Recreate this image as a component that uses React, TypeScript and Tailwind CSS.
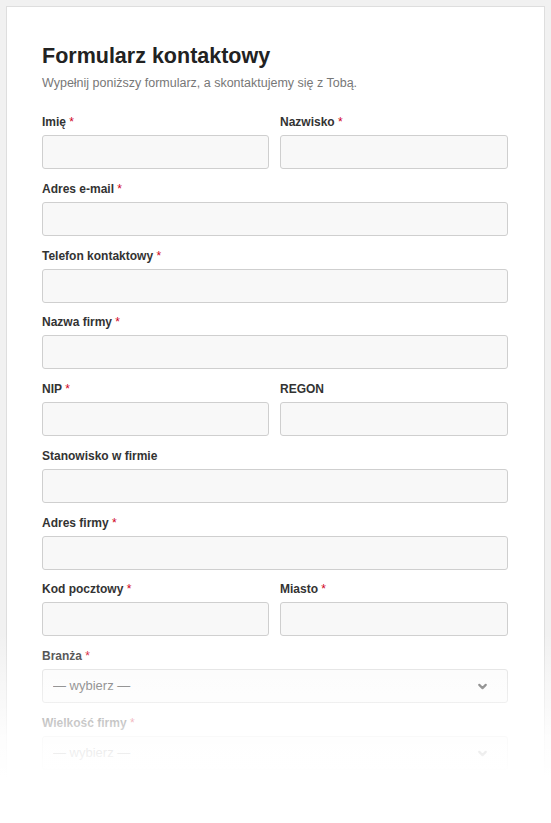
import { ChevronDown } from "lucide-react";

type Field = {
  label: string;
  required?: boolean;
};

const rows: Field[][] = [
  [{ label: "Imię", required: true }, { label: "Nazwisko", required: true }],
  [{ label: "Adres e-mail", required: true }],
  [{ label: "Telefon kontaktowy", required: true }],
  [{ label: "Nazwa firmy", required: true }],
  [{ label: "NIP", required: true }, { label: "REGON" }],
  [{ label: "Stanowisko w firmie" }],
  [{ label: "Adres firmy", required: true }],
  [{ label: "Kod pocztowy", required: true }, { label: "Miasto", required: true }],
];

function Label({ label, required }: Field) {
  return (
    <label className="block text-[12px] leading-[16px] font-bold text-[#333] mb-[5px]">
      {label}
      {required && <span className="text-[#d0021b] font-normal"> *</span>}
    </label>
  );
}

function TextField(f: Field) {
  return (
    <div>
      <Label {...f} />
      <input
        type="text"
        className="block w-full h-[34px] rounded-[3px] border border-[#cfcfcf] bg-[#f8f8f8] px-3 text-[13px] outline-none"
      />
    </div>
  );
}

function SelectField(f: Field) {
  return (
    <div>
      <Label {...f} />
      <div className="relative">
        <select className="block w-full h-[34px] appearance-none rounded-[3px] border border-[#dcdcdc] bg-[#fbfbfb] pl-[10px] pr-8 text-[13px] text-[#444] outline-none">
          <option>— wybierz —</option>
        </select>
        <ChevronDown
          size={13}
          strokeWidth={4}
          className="pointer-events-none absolute right-[19px] top-[11px] text-[#444]"
        />
      </div>
    </div>
  );
}

export default function App() {
  return (
    <div
      className="relative h-screen overflow-hidden bg-[#f1f1f1] px-[6px] pt-[6px]"
      style={{ fontFamily: '"Liberation Sans", Arial, sans-serif' }}
    >
      <div className="border border-[#dedede] bg-white pl-[35px] pr-[36px] pt-[36px] pb-10">
        <h1 className="text-[21.5px] leading-[26px] font-bold text-[#222]">Formularz kontaktowy</h1>
        <p className="mt-[5px] text-[12.5px] leading-[18px] text-[#777]">
          Wypełnij poniższy formularz, a skontaktujemy się z Tobą.
        </p>

        <form className="mt-[22px] flex flex-col gap-[11.78px]">
          {rows.map((row, i) => (
            <div key={i} className={row.length > 1 ? "grid grid-cols-[227px_1fr] gap-[11px]" : ""}>
              {row.map((f) => (
                <TextField key={f.label} {...f} />
              ))}
            </div>
          ))}
          <SelectField label="Branża" required />
          <SelectField label="Wielkość firmy" required />
          <SelectField label="Liczba pracowników" required />
        </form>
      </div>

      {/* fade-out at the bottom of the page */}
      <div className="pointer-events-none absolute inset-x-0 bottom-0 h-[190px] bg-[linear-gradient(to_bottom,rgba(255,255,255,0)_0%,rgba(255,255,255,0.85)_55%,#fff_76%,#fff_100%)]" />
    </div>
  );
}
